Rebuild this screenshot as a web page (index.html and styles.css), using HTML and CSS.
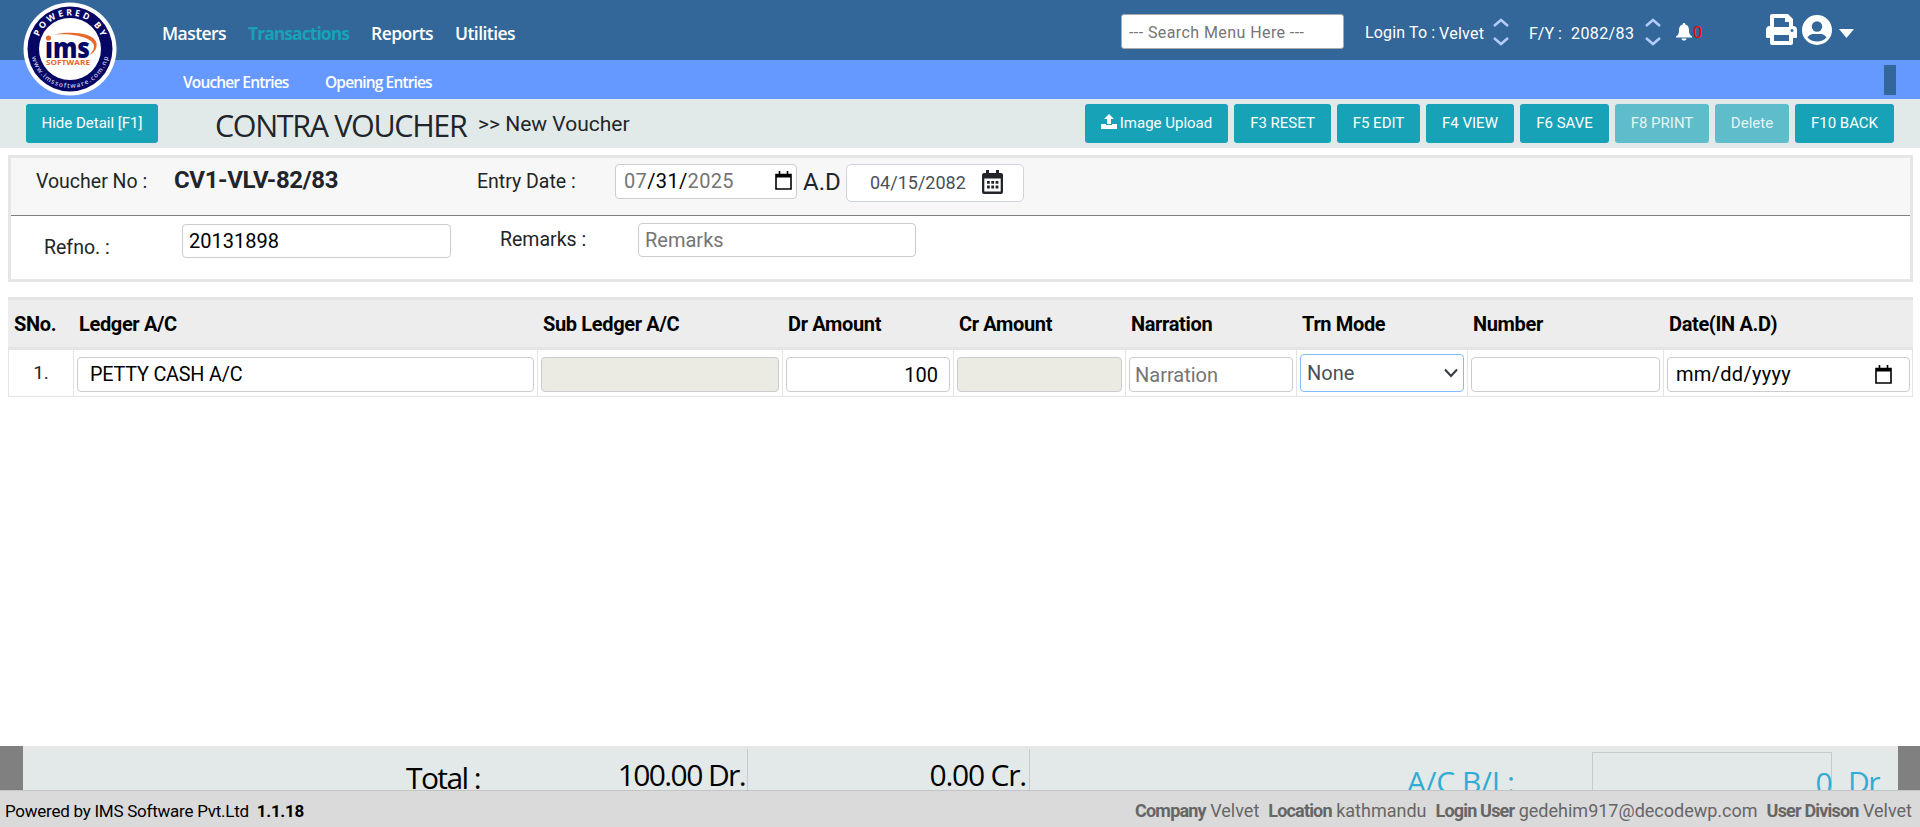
FILE: index.html
```html
<!DOCTYPE html>
<html lang="en">
<head>
<meta charset="utf-8">
<title>Contra Voucher</title>
<link rel="stylesheet" href="styles.css">
</head>
<body>
<div class="page">
  <header class="top">
    <svg class="logo" viewBox="0 0 94 94">
      <circle cx="47" cy="47" r="46.5" fill="#fff"/>
      <circle cx="47" cy="47" r="42.5" fill="#060665"/>
      <circle cx="47" cy="47" r="31" fill="#fff"/>
      <path id="arcTop" d="M13.500 47a33.500 33.500 0 0 1 67 0" fill="none"/>
      <path id="arcBottom" d="M8 47a39 39 0 0 0 78 0" fill="none"/>
      <text class="logo-top"><textPath href="#arcTop" startOffset="50%" text-anchor="middle" textLength="80">POWERED BY</textPath></text>
      <text class="logo-url"><textPath href="#arcBottom" startOffset="50%" text-anchor="middle" textLength="106">www.imssoftware.com.np</textPath></text>
      <text class="logo-ims" x="22" y="55.500" textLength="45" lengthAdjust="spacingAndGlyphs">ıms</text>
      <circle cx="25.500" cy="36" r="2.600" fill="#e8682c"/>
      <path d="M31 32.500c14-3.500 40-2.500 42.500 8.500 1 6-3 10-7.500 12 4-3.500 6-7 4.500-11-4-8-25-11-39.500-9.500z" fill="#e8682c"/>
      <text class="logo-soft" x="23" y="62.800" textLength="44" lengthAdjust="spacingAndGlyphs">SOFTWARE</text>
    </svg>
    <nav class="nav">
      <a class="n1">Masters</a><a class="n2">Transactions</a><a class="n3">Reports</a><a class="n4">Utilities</a>
    </nav>
    <div class="tools">
      <input class="search" placeholder="--- Search Menu Here ---">
      <span class="login">Login To :</span><span class="velvet">Velvet</span>
      <svg class="updown" width="16" height="28" viewBox="0 0 16 28"><path d="M1 8l7-6 7 6M1 20l7 6 7-6"/></svg>
      <span class="fy">F/Y :</span><span class="year">2082/83</span>
      <svg class="updown second" width="16" height="28" viewBox="0 0 16 28"><path d="M1 8l7-6 7 6M1 20l7 6 7-6"/></svg>
      <svg class="bell" width="16" height="18" viewBox="0 0 16 18"><path fill="#fff" d="M8 0c1 0 1.300.6 1.300 1.500C12 2.200 13 4.500 13 7c0 4 1 5 3 6.500V14.500H0V13.500C2 12 3 11 3 7c0-2.500 1-4.800 3.700-5.500C6.700.6 7 0 8 0zM5.500 15.500h5c0 2.800-5 2.800-5 0z"/></svg>
      <span class="count">0</span>
      <svg class="printer" width="31" height="31" viewBox="0 0 31 31"><path fill="#fff" fill-rule="evenodd" d="M4 2a2 2 0 0 1 2-2h16l5 5v7a4 4 0 0 1 4 4v7a1 1 0 0 1-1 1h-3v5a2 2 0 0 1-2 2H6a2 2 0 0 1-2-2v-5H1a1 1 0 0 1-1-1v-7a4 4 0 0 1 4-4zM8 4v9h15V8h-4V4zM8 21v6h15v-6zM26 15a1.500 1.500 0 1 0 .01 0z"/></svg>
      <svg class="user" width="30" height="30" viewBox="0 0 30 30"><circle cx="15" cy="15" r="15" fill="#fff"/><circle cx="15" cy="11.500" r="5.200" fill="#336799"/><path fill="#336799" d="M5.500 22.500C8 18 11.500 19 15 19s7 -1 9.500 3.500C22 25 19 26.500 15 26.500S8 25 5.500 22.500z"/></svg>
      <svg class="caret" width="15" height="9" viewBox="0 0 15 9"><path fill="#fff" d="M0 0h15L7.500 9z"/></svg>
    </div>
  </header>
  <div class="sub">
    <a class="s1">Voucher Entries</a><a class="s2">Opening Entries</a><span class="block"></span>
  </div>
  <div class="titlebar">
    <button class="btn hide">Hide Detail [F1]</button>
    <h1>CONTRA VOUCHER</h1>
    <span class="crumb">&gt;&gt; New Voucher</span>
    <div class="actions">
      <button class="btn b1"><svg width="16" height="15" viewBox="0 0 16 15"><path fill="#fff" d="M8 0l5 5h-3v5H6V5H3zM0 10h5v1h6v-1h5v5H0z"/></svg>Image Upload</button>
      <button class="btn b2">F3 RESET</button>
      <button class="btn b3">F5 EDIT</button>
      <button class="btn b4">F4 VIEW</button>
      <button class="btn b5">F6 SAVE</button>
      <button class="btn b6 off">F8 PRINT</button>
      <button class="btn b7 off">Delete</button>
      <button class="btn b8">F10 BACK</button>
    </div>
  </div>
  <section class="panel">
    <div class="prow first">
      <span class="lab vno">Voucher No :</span>
      <b class="code">CV1-VLV-82/83</b>
      <span class="lab edate">Entry Date :</span>
      <div class="field date"><span><i>07</i>/31/<i>2025</i></span>
        <svg class="cal" width="17" height="19" viewBox="0 0 17 19"><path d="M1 3.500h15v14.500H1zM4.500 0v3M12.500 0v3" fill="none" stroke="#000" stroke-width="1.600"/><path d="M1 3h15v3.500H1z"/></svg></div>
      <span class="ad">A.D</span>
      <div class="field bs"><span>04/15/2082</span>
        <svg width="21" height="24" viewBox="0 0 21 24"><path fill="#212529" fill-rule="evenodd" d="M4 0h3v3h7V0h3v3h2a2 2 0 0 1 2 2v17a2 2 0 0 1-2 2H2a2 2 0 0 1-2-2V5a2 2 0 0 1 2-2h2zM2.300 8.500v13h16.400v-13z"/><path d="M5 12.300h11.500M5 17h11.500" stroke="#212529" stroke-width="2.800" stroke-dasharray="2.800 1.500"/></svg></div>
    </div>
    <div class="prow second-row">
      <span class="lab ref">Refno. :</span>
      <input class="field refin" value="20131898">
      <span class="lab rem">Remarks :</span>
      <input class="field remin" placeholder="Remarks">
    </div>
  </section>
  <section class="grid">
    <div class="cols head">
      <span>SNo.</span><span>Ledger A/C</span><span>Sub Ledger A/C</span><span>Dr Amount</span><span>Cr Amount</span><span>Narration</span><span>Trn Mode</span><span>Number</span><span>Date(IN A.D)</span>
    </div>
    <div class="cols line">
      <div class="sn">1.</div>
      <div><input class="field ledger" value="PETTY CASH A/C"></div>
      <div><input class="field dim" disabled></div>
      <div><input class="field num" value="100"></div>
      <div><input class="field dim" disabled></div>
      <div><input class="field" placeholder="Narration"></div>
      <div><div class="field mode">None<svg width="14" height="10" viewBox="0 0 14 10"><path d="M1 1.500l6 6.500 6-6.500" fill="none" stroke="#343a40" stroke-width="2"/></svg></div></div>
      <div><input class="field"></div>
      <div><div class="field dt"><span>mm/dd/yyyy</span><svg width="17" height="19" viewBox="0 0 17 19"><path d="M1 3.500h15v14.500H1zM4.500 0v3M12.500 0v3" fill="none" stroke="#000" stroke-width="1.600"/><path d="M1 3h15v3.500H1z"/></svg></div></div>
    </div>
  </section>
  <section class="totals">
    <span class="tot">Total :</span>
    <span class="dr">100.00 Dr.</span>
    <span class="cr">0.00 Cr.</span>
    <span class="bal">A/C B/L:</span>
    <span class="balbox">0</span>
    <span class="baldr">Dr</span>
  </section>
  <footer class="foot">
    <span class="pow">Powered by IMS Software Pvt.Ltd</span><b class="ver">1.1.18</b>
    <div class="info"><span><b>Company</b> Velvet</span><span><b>Location</b> kathmandu</span><span><b>Login User</b> gedehim917@decodewp.com</span><span><b>User Divison</b> Velvet</span></div>
  </footer>
</div>
</body>
</html>
```
FILE: styles.css
```css
* { box-sizing: border-box; }
body { margin: 0; font-family: Roboto, sans-serif; color: #212529; background: #fff; }
.page { width: 1920px; height: 827px; display: flex; flex-direction: column; overflow: hidden; }
span, a, b { white-space: nowrap; }
input, button { font-family: inherit; }

.top { position: relative; height: 60px; flex: none; background: #336799; display: flex; }
.logo { position: absolute; left: 23px; top: 2px; width: 94px; height: 94px; z-index: 2; }
.logo-top { font: 700 8.800px "Open Sans", sans-serif; fill: #fff; }
.logo-url { font: 600 6.600px "Open Sans", sans-serif; fill: #c9c9e6; }
.logo-ims { font: 800 28px "Open Sans", sans-serif; fill: #060665; }
.logo-soft { font: 700 6.500px "Open Sans", sans-serif; fill: #e8682c; }
.nav { display: flex; width: 1121px; padding-left: 162px; font: 600 17.500px/66px "Open Sans", sans-serif; color: #fff; }
.nav a { flex: none; letter-spacing: -0.55px; }
.nav .n1 { width: 86px; }
.nav .n2 { width: 123px; color: #17a2b8; font-weight: 700; letter-spacing: -0.95px; }
.nav .n3 { width: 84px; }
.tools { display: flex; color: #fff; font-size: 16px; line-height: 66px; }
.tools > * { flex: none; }
.search { width: 223px; height: 35px; margin: 14px 22px 0 0; padding: 2px 7px 0; border: 1px solid #aaa; border-radius: 3px; font-size: 16px; letter-spacing: 0.42px; background: #fff; }
.search::placeholder { color: #757575; }
.login { width: 74px; margin-left: -1px; letter-spacing: 0.15px; }
.velvet { width: 54px; letter-spacing: 0.3px; line-height: 67px; }
.updown { margin-top: 18px; fill: none; stroke: #b3ccff; stroke-width: 2.5px; }
.fy { width: 42px; margin-left: 20px; line-height: 67px; }
.year { width: 74px; letter-spacing: 0.4px; line-height: 67px; }
.bell { margin: 23px 1px 0 15px; }
.count { width: 73px; color: #f00; }
.printer { margin-top: 14px; }
.user { margin: 15px 0 0 5px; }
.caret { margin: 29px 0 0 7px; }

.sub { height: 39px; flex: none; background: #6699ff; display: flex; padding-left: 183px; color: #fff; font: 600 15.500px/45px "Open Sans", sans-serif; letter-spacing: -0.85px; }
.s1 { width: 142px; }
.block { width: 12px; height: 30px; margin: 5px 24px 0 auto; background: #336799; }

.titlebar { height: 49px; flex: none; background: #e2eae9; display: flex; padding: 5px 26px 0; }
.btn { height: 39px; padding: 0 0 2px; border: 0; border-radius: 3px; background: #17a2b8; color: #fff; font-size: 15px; white-space: nowrap; flex: none; }
.btn svg { margin-right: 3px; vertical-align: -1px; }
.hide { width: 132px; }
h1 { width: 263px; margin: 0 0 0 57px; font: 400 30.500px/42px "Open Sans", sans-serif; letter-spacing: -1.35px; white-space: nowrap; }
.crumb { font-size: 21px; line-height: 40px; }
.actions { display: flex; gap: 6px; margin-left: auto; }
.b1 { width: 143px; } .b2 { width: 97px; } .b3 { width: 83px; } .b4 { width: 88px; }
.b5 { width: 89px; } .b6 { width: 94px; } .b7 { width: 74px; } .b8 { width: 99px; }
.off { background: #5fbccb; color: #e4f4f6; }

.panel { flex: none; width: 1905px; height: 127px; margin: 7px 0 0 8px; border: 3px solid #e6e6e6; }
.prow { display: flex; }
.prow > * { flex: none; }
.first { height: 58px; background: #f7f7f7; border-bottom: 1px solid #808080; padding-left: 25px; }
.lab { font-size: 19.500px; line-height: 47px; }
.vno { width: 138px; }
.code { width: 303px; font-size: 24px; line-height: 45px; letter-spacing: -0.35px; }
.edate { width: 138px; }
.field { display: flex; align-items: center; height: 35px; border: 1px solid #ccc; border-radius: 4px; background: #fff; font-size: 20px; color: #000; padding: 0 5px; outline: none; }
.field::placeholder { color: #757575; }
.date { width: 182px; margin-top: 6px; padding: 0 4px 2px 8px; justify-content: space-between; letter-spacing: 0.35px; }
.date i { font-style: normal; color: #757575; }
.ad { width: 49px; padding-left: 6px; font-size: 24px; line-height: 48px; }
.bs { width: 178px; height: 38px; margin-top: 6px; padding: 0 0 2px 23px; border-color: #ced4da; border-radius: 5px; color: #495057; font-size: 18px; }
.bs span { width: 112px; }
.second-row { padding-left: 33px; }
.ref { width: 138px; line-height: 64px; }
.refin { width: 269px; margin: 8px 49px 0 0; height: 34px; padding-left: 6px; }
.rem { width: 138px; line-height: 48px; }
.remin { width: 278px; height: 34px; margin-top: 7px; padding-left: 6px; }

.grid { flex: none; width: 1905px; margin: 15px 0 0 8px; }
.cols { display: grid; grid-template-columns: 65px 464px 245px 171px 172px 171px 171px 196px 250px; }
.head { height: 53px; border-top: 3px solid #e4e4e4; border-bottom: 3px solid #e4e4e4; background: #ededed; color: #000; font-weight: 700; font-size: 20px; line-height: 48px; letter-spacing: -0.35px; }
.head span { padding-left: 6px; }
.line { height: 47px; border: 1px solid #e4e4e4; border-top: 0; }
.line > div { border-right: 1px solid #e4e4e4; padding: 7px 3px 0 3px; }
.line > div:last-child { border-right: 0; }
.line .field { width: 100%; }
.line .sn { padding: 0; text-align: center; font-size: 19px; line-height: 45px; }
.line .ledger { padding-left: 12px; font-size: 19.800px; letter-spacing: -0.2px; }
.line .dim { background: #ebebe4; }
.line .num { text-align: right; padding-right: 11px; }
.line .mode { height: 38px; margin-top: -3px; padding-left: 6px; justify-content: space-between; border-color: #80bdff; color: #495057; }
.line .dt { width: 243px; justify-content: space-between; padding: 0 17px 1px 8px; letter-spacing: 0.3px; }

.totals { flex: none; display: flex; height: 44px; margin-top: auto; border: solid #808080; border-width: 0 22px 0 23px; background: #e2e9e8; box-shadow: inset 0 3px #e6e6e6; overflow: hidden; font: 400 30px/54px "Open Sans", sans-serif; letter-spacing: -1.6px; color: #000; padding-left: 383px; }
.totals > * { flex: none; }
.tot { width: 130px; line-height: 63px; }
.dr, .cr { margin-top: 3px; line-height: 52px; text-align: right; padding-right: 2px; border-right: 1px solid #c8ccce; }
.dr { width: 212px; }
.cr { width: 282px; padding-right: 3px; letter-spacing: -1.2px; }
.bal { width: 185px; margin-left: 377px; line-height: 71px; letter-spacing: -0.4px; }
.bal, .balbox, .baldr { color: #31acd5; }
.balbox { width: 240px; margin-top: 6px; height: 60px; line-height: 59px; border: 1px solid #c5cacc; text-align: right; }
.baldr { padding-left: 16px; line-height: 71px; }
.foot { flex: none; height: 37px; display: flex; background: #dadada; border-top: 1px solid #c4c4c4; color: #000; font-size: 17px; line-height: 41px; padding: 0 8px 0 5px; }
.pow { letter-spacing: -0.25px; }
.ver { margin-left: 8px; letter-spacing: -0.3px; }
.info { display: flex; gap: 9px; margin-left: auto; color: #666; font-size: 18px; line-height: 39px; }
.info b { letter-spacing: -0.82px; }
```
